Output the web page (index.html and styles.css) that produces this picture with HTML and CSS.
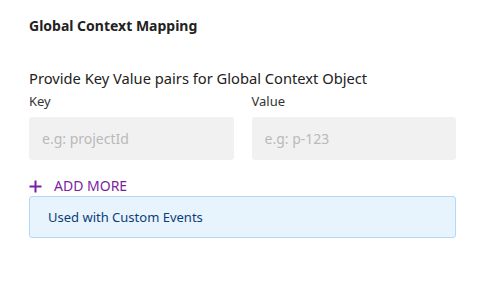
FILE: index.html
```html
<!DOCTYPE html>
<html lang="en">

<head>
  <meta charset="UTF-8">
  <meta name="viewport" content="width=device-width, initial-scale=1.0">
  <title>Global Context Mapping</title>
  <link rel="stylesheet" href="styles.css">
</head>

<body>
  <div class="panel">
    <h2 class="panel-title">Global Context Mapping</h2>
    <div class="section-title">Provide Key Value pairs for Global Context Object</div>
    <div class="pair-row">
      <label class="field">
        <span class="field-label">Key</span>
        <input class="field-input" type="text" placeholder="e.g: projectId">
      </label>
      <label class="field">
        <span class="field-label">Value</span>
        <input class="field-input" type="text" placeholder="e.g: p-123">
      </label>
    </div>
    <button class="add-more" type="button">
      <svg class="add-icon" width="13" height="13" viewBox="0 0 13 13">
        <path d="M6.5 0.5v12M0.5 6.5h12" stroke="currentColor" stroke-width="2" fill="none" />
      </svg>
      ADD MORE
    </button>
    <div class="info-box">Used with Custom Events</div>
  </div>
</body>

</html>
```

FILE: styles.css
```css
/* Global context mapping panel */
body {
  margin: 0;
  font-family: "Noto Sans", sans-serif;
  color: #222;
  background: #fff;
}

.panel {
  padding: 16px 36px 0 29px;
}

.panel-title {
  margin: 0;
  font-size: 14px;
  font-weight: 700;
  line-height: 20px;
}

.section-title {
  margin-top: 32px;
  font-size: 14.7px;
  line-height: 20px;
  color: #222;
}

.pair-row {
  display: flex;
  gap: 18px;
  margin-top: 4px;
}

.field {
  display: flex;
  flex-direction: column;
  flex: 1;
  min-width: 0;
}

.field-label {
  font-size: 13px;
  line-height: 18px;
  color: #333;
}

.field-input {
  width: 100%;
  min-width: 0;
  margin-top: 7px;
  height: 43px;
  box-sizing: border-box;
  border: none;
  border-radius: 3px;
  background: #f1f1f1;
  padding: 0 13px;
  font-family: inherit;
  font-size: 14px;
  color: #333;
  outline: none;
}

.field-input::placeholder {
  color: #b9b9b9;
}

.add-more {
  display: flex;
  align-items: center;
  gap: 12px;
  margin-top: 16px;
  padding: 0;
  border: none;
  background: none;
  font-family: inherit;
  font-size: 14px;
  line-height: 20px;
  color: #7b1fa2;
  cursor: pointer;
}

.add-icon {
  display: block;
}

.info-box {
  margin-top: 0;
  height: 42px;
  box-sizing: border-box;
  padding: 0 18px;
  display: flex;
  align-items: center;
  background: #e8f4fd;
  border: 1px solid #b3d8f8;
  border-radius: 3px;
  font-size: 13px;
  color: #0d3c78;
}
```
